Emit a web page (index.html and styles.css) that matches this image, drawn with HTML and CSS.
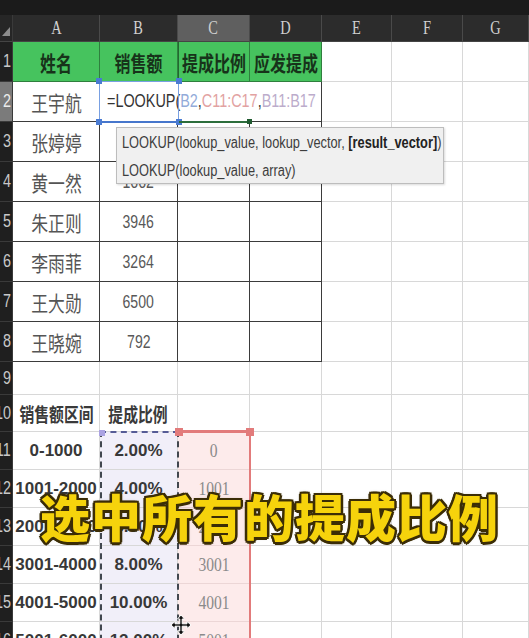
FILE: index.html
```html
<!DOCTYPE html>
<html lang="zh-CN">
<head>
<meta charset="utf-8">
<title>LOOKUP 提成比例</title>
<link rel="stylesheet" href="styles.css">
</head>
<body>
<div class="wrap">
  <div class="sheet">
    <div class="topbar"></div>

    <div class="corner"><span class="tri"></span></div>
    <div class="ch"><span>A</span></div>
    <div class="ch"><span>B</span></div>
    <div class="ch on"><span>C</span></div>
    <div class="ch"><span>D</span></div>
    <div class="ch"><span>E</span></div>
    <div class="ch"><span>F</span></div>
    <div class="ch"><span>G</span></div>

    <div class="rh"><span>1</span></div>
    <div class="c t g"><span>姓名</span></div>
    <div class="c t g"><span>销售额</span></div>
    <div class="c t g gc"><span>提成比例</span></div>
    <div class="c t g"><span>应发提成</span></div>
    <div class="c"></div><div class="c"></div><div class="c"></div>

    <div class="rh on"><span>2</span></div>
    <div class="c t name"><span>王宇航</span></div>
    <div class="c t edit"><span class="fx">=LOOKUP(<span class="r1">B2</span>,<span class="r2">C11:C17</span>,<span class="r3">B11:B17</span></span></div>
    <div class="c"></div><div class="c"></div><div class="c"></div>

    <div class="rh"><span>3</span></div>
    <div class="c t name"><span>张婷婷</span></div>
    <div class="c t num"><span>2850</span></div>
    <div class="c t"></div><div class="c t"></div>
    <div class="c"></div><div class="c"></div><div class="c"></div>

    <div class="rh"><span>4</span></div>
    <div class="c t name"><span>黄一然</span></div>
    <div class="c t num"><span>1662</span></div>
    <div class="c t"></div><div class="c t"></div>
    <div class="c"></div><div class="c"></div><div class="c"></div>

    <div class="rh"><span>5</span></div>
    <div class="c t name"><span>朱正则</span></div>
    <div class="c t num"><span>3946</span></div>
    <div class="c t"></div><div class="c t"></div>
    <div class="c"></div><div class="c"></div><div class="c"></div>

    <div class="rh"><span>6</span></div>
    <div class="c t name"><span>李雨菲</span></div>
    <div class="c t num"><span>3264</span></div>
    <div class="c t"></div><div class="c t"></div>
    <div class="c"></div><div class="c"></div><div class="c"></div>

    <div class="rh"><span>7</span></div>
    <div class="c t name"><span>王大勋</span></div>
    <div class="c t num"><span>6500</span></div>
    <div class="c t"></div><div class="c t"></div>
    <div class="c"></div><div class="c"></div><div class="c"></div>

    <div class="rh"><span>8</span></div>
    <div class="c t name"><span>王晓婉</span></div>
    <div class="c t num"><span>792</span></div>
    <div class="c t"></div><div class="c t"></div>
    <div class="c"></div><div class="c"></div><div class="c"></div>

    <div class="rh"><span>9</span></div>
    <div class="c"></div><div class="c"></div><div class="c"></div><div class="c"></div>
    <div class="c"></div><div class="c"></div><div class="c"></div>

    <div class="rh"><span>10</span></div>
    <div class="c hd"><span>销售额区间</span></div>
    <div class="c hd"><span>提成比例</span></div>
    <div class="c"></div><div class="c"></div>
    <div class="c"></div><div class="c"></div><div class="c"></div>

    <div class="rh"><span>11</span></div>
    <div class="c rg"><span>0-1000</span></div>
    <div class="c rg sb"><span>2.00%</span></div>
    <div class="c cv sc"><span>0</span></div>
    <div class="c"></div><div class="c"></div><div class="c"></div><div class="c"></div>

    <div class="rh"><span>12</span></div>
    <div class="c rg"><span>1001-2000</span></div>
    <div class="c rg sb"><span>4.00%</span></div>
    <div class="c cv sc"><span>1001</span></div>
    <div class="c"></div><div class="c"></div><div class="c"></div><div class="c"></div>

    <div class="rh"><span>13</span></div>
    <div class="c rg"><span>2001-3000</span></div>
    <div class="c rg sb"><span>6.00%</span></div>
    <div class="c cv sc"><span>2001</span></div>
    <div class="c"></div><div class="c"></div><div class="c"></div><div class="c"></div>

    <div class="rh"><span>14</span></div>
    <div class="c rg"><span>3001-4000</span></div>
    <div class="c rg sb"><span>8.00%</span></div>
    <div class="c cv sc"><span>3001</span></div>
    <div class="c"></div><div class="c"></div><div class="c"></div><div class="c"></div>

    <div class="rh"><span>15</span></div>
    <div class="c rg"><span>4001-5000</span></div>
    <div class="c rg sb"><span>10.00%</span></div>
    <div class="c cv sc"><span>4001</span></div>
    <div class="c"></div><div class="c"></div><div class="c"></div><div class="c"></div>

    <div class="rh"><span>16</span></div>
    <div class="c rg"><span>5001-6000</span></div>
    <div class="c rg sb"><span>12.00%</span></div>
    <div class="c cv sc"><span>5001</span></div>
    <div class="c"></div><div class="c"></div><div class="c"></div><div class="c"></div>
  </div>

  <div class="sel-b2">
    <span class="hd-tl"></span><span class="hd-tr"></span><span class="hd-bl"></span><span class="hd-br"></span>
  </div>
  <div class="line-c2"><span class="hd-end"></span></div>

  <div class="tip">
    <div class="tl"><span>LOOKUP(lookup_value, lookup_vector, <b>[result_vector]</b>)</span></div>
    <div class="tl"><span>LOOKUP(lookup_value, array)</span></div>
  </div>

  <div class="sel-b"><span class="sq-b"></span></div>
  <div class="sel-c"><span class="sq-l"></span><span class="sq-r"></span></div>

  <div class="cap">选中所有的提成比例</div>

  <svg class="cursor" width="22" height="22" viewBox="0 0 22 22">
    <path d="M11 1 L14.5 5 H12.2 V9.8 H17 V7.5 L21 11 L17 14.5 V12.2 H12.2 V17 H14.5 L11 21 L7.5 17 H9.8 V12.2 H5 V14.5 L1 11 L5 7.5 V9.8 H9.8 V5 H7.5 Z" fill="#111" stroke="#fff" stroke-width="1"/>
  </svg>
</div>
</body>
</html>
```

FILE: styles.css
```css
* { box-sizing: border-box; }
html, body { margin: 0; padding: 0; background: #fff; }
body {
  width: 529px;
  height: 638px;
  overflow: hidden;
  font-family: "Liberation Sans", "Noto Sans CJK SC", sans-serif;
}
.wrap { position: relative; width: 529px; height: 638px; overflow: hidden; }

.sheet {
  display: grid;
  grid-template-columns: 13px 87px 78px 72px 72px 70px 71px 66px;
  grid-template-rows: 15px 27px repeat(8, 40px) 33px 37px repeat(6, 38px);
}
.topbar { grid-column: 1 / -1; background: #1b1b1b; }

.corner {
  background: #262626;
  border-right: 1px solid #3a3a3a;
  border-bottom: 1px solid #444;
  display: flex;
  align-items: flex-end;
  justify-content: flex-end;
  padding: 0 2px 5px 0;
}
.tri { width: 0; height: 0; border-left: 8px solid transparent; border-bottom: 9px solid #8c8c8c; }

.ch {
  background: #2c2c2c;
  border-right: 1px solid #4a4a4a;
  border-bottom: 1px solid #444;
  display: flex;
  align-items: center;
  justify-content: center;
  color: #d0d0d0;
  font-family: "Liberation Serif", serif;
  font-size: 18px;
}
.ch > span { display: inline-block; transform: scaleX(.8); }
.ch.on { background: #5f5f5f; }

.rh {
  background: #1f1f1f;
  border-right: 1px solid #3a3a3a;
  border-bottom: 1px solid #3a3a3a;
  display: flex;
  align-items: center;
  justify-content: flex-end;
  padding-right: 1px;
  overflow: hidden;
  color: #c8c8c8;
  font-size: 18px;
}
.rh > span { display: inline-block; transform: scaleX(.8); transform-origin: right center; }
.rh.on { background: #7b7b7b; color: #ececec; }

.c {
  border-right: 1px solid #d8d8d8;
  border-bottom: 1px solid #d8d8d8;
  display: flex;
  align-items: center;
  justify-content: center;
  white-space: nowrap;
  overflow: hidden;
  color: #444;
  font-size: 17px;
}
.c > span { display: inline-block; transform: scaleX(.8); }
.t { border-color: #3b3b3b; }

.g {
  background: #46c35e;
  border-color: #2f7f3e;
  color: #17331a;
  font-family: "Noto Sans CJK SC", sans-serif;
  font-weight: 700;
  font-size: 21px;
}
.g > span { transform: scaleX(.76); }
.gc { border-left: 1px solid #22692f; }

.name { font-family: "Noto Sans CJK SC", sans-serif; font-size: 21px; color: #555; }
.num { font-size: 19px; color: #585858; }
.num > span { transform: scaleX(.74); }

.edit {
  grid-column: span 3;
  justify-content: flex-start;
  padding-left: 7px;
  background: #fff;
}
.c > .fx { transform-origin: left center; font-size: 18px; color: #333; }
.r1 { color: #93abd9; }
.r2 { color: #e2a2a2; }
.r3 { color: #bcaccb; }

.hd { font-family: "Noto Sans CJK SC", sans-serif; font-weight: 700; font-size: 19px; color: #3a3a3a; }
.hd > span { transform: scaleX(.78); }
.rg { font-weight: 700; font-size: 17px; color: #383838; }
.rg > span { transform: none; }
.sb { background: #f1eff9; }
.sc { background: #fdebeb; border-bottom-color: #ecd6d6; }
.cv { font-family: "Liberation Serif", serif; font-size: 19px; color: #8a8a8a; }
.cv > span { transform: scaleX(.82); }

/* overlays */
.sel-b2 {
  position: absolute;
  left: 99px; top: 81px; width: 80px; height: 42px;
  border: 1px solid #79a0e2;
  border-bottom: 2px solid #4676cc;
}
.sel-b2 span { position: absolute; width: 6px; height: 6px; background: #4a7bd2; }
.hd-tl { left: -4px; top: -4px; }
.hd-tr { right: -4px; top: -4px; }
.hd-bl { left: -4px; bottom: -4px; }
.hd-br { right: -4px; bottom: -4px; }
.line-c2 {
  position: absolute;
  left: 179px; top: 121px; width: 71px; height: 2px;
  background: #2c6e3c;
}
.hd-end { position: absolute; right: -2px; top: -2px; width: 5px; height: 5px; background: #1f5a2f; }

.tip {
  position: absolute;
  left: 116px; top: 127px; width: 328px; height: 57px;
  background: #f0f0f0;
  border: 1px solid #bdbdbd;
  box-shadow: 1px 1px 2px rgba(0, 0, 0, .15);
  padding: 1px 0 0 5px;
  color: #3d3d3d;
  font-size: 16px;
  white-space: nowrap;
}
.tl { height: 28px; display: flex; align-items: center; }
.tl > span { display: inline-block; transform: scaleX(.8); transform-origin: left center; }
.tl b { color: #222; }

.sel-b {
  position: absolute;
  left: 100px; top: 431px; width: 79px; height: 220px;
  border: 2px dashed #41474f;
  border-top-color: #565c96;
}
.sq-b { position: absolute; left: -3px; top: -3px; width: 6px; height: 6px; background: #aaa2e2; }
.sel-c {
  position: absolute;
  left: 179px; top: 430px; width: 72px; height: 220px;
  border-top: 3px solid #e27b7b;
  border-right: 2px solid #e27b7b;
}
.sel-c span { position: absolute; top: -5px; width: 8px; height: 8px; background: #e27b7b; }
.sq-l { left: -4px; }
.sq-r { right: -5px; }

.cap {
  position: absolute;
  left: 40px; top: 490px;
  font-family: "Noto Sans CJK SC", sans-serif;
  font-weight: 900;
  font-size: 50px;
  line-height: 50px;
  letter-spacing: 1px;
  color: #f6d30c;
  white-space: nowrap;
  text-shadow:
    2.5px 0 #3b2d06, -2.5px 0 #3b2d06, 0 2.5px #3b2d06, 0 -2.5px #3b2d06,
    1.8px 1.8px #3b2d06, -1.8px -1.8px #3b2d06, 1.8px -1.8px #3b2d06, -1.8px 1.8px #3b2d06,
    0 0 4px rgba(0, 0, 0, .35);
}
.cursor { position: absolute; left: 170px; top: 614px; }
```
